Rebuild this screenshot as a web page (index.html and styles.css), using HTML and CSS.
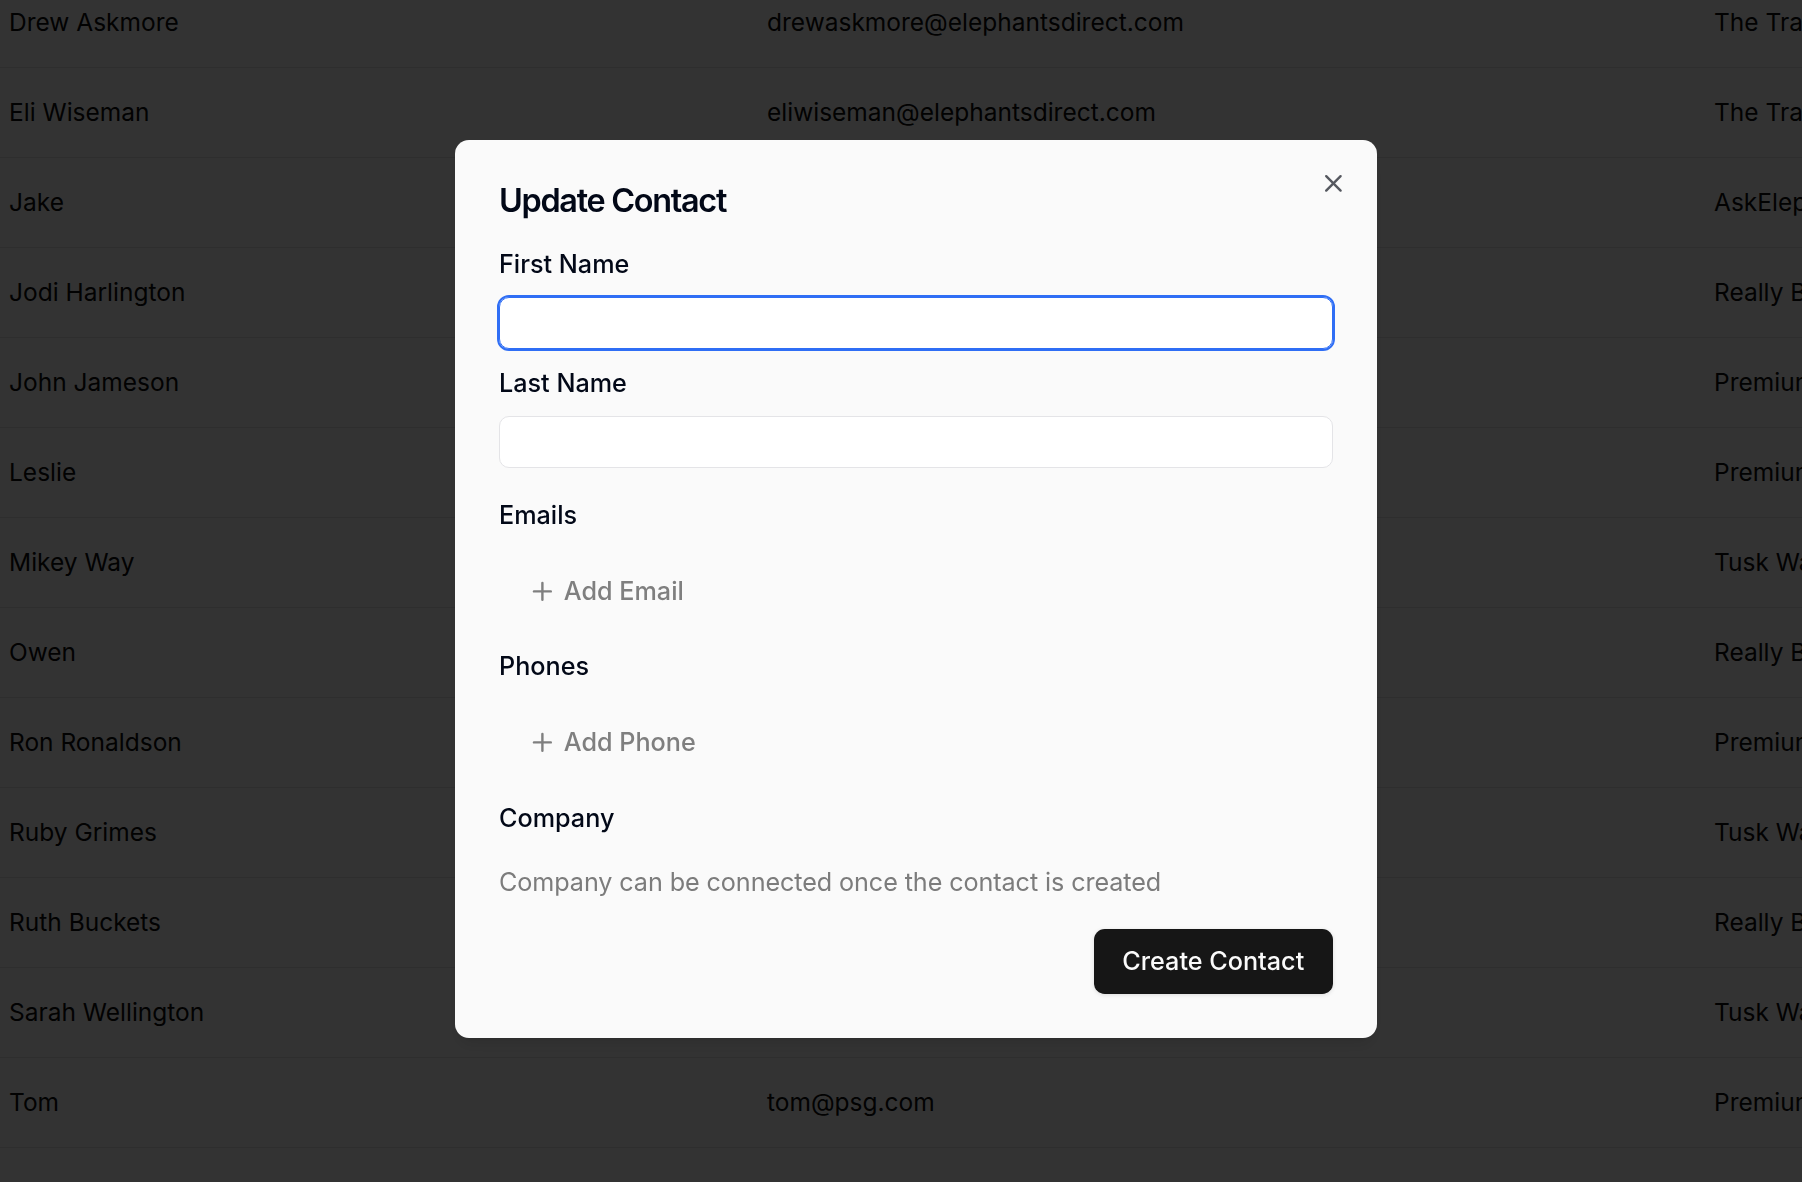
FILE: index.html
```html
<!DOCTYPE html>
<html lang="en">
<head>
<meta charset="utf-8">
<title>Contacts – Update Contact</title>
<link rel="stylesheet" href="styles.css">
</head>
<body>
<main class="contacts">
  <div class="row"><div class="cell name">Drew Askmore</div><div class="cell email">drewaskmore@elephantsdirect.com</div><div class="cell company">The Trading Post</div></div>
  <div class="row"><div class="cell name">Eli Wiseman</div><div class="cell email">eliwiseman@elephantsdirect.com</div><div class="cell company">The Trading Post</div></div>
  <div class="row"><div class="cell name">Jake</div><div class="cell email">jake@askelephant.ai</div><div class="cell company">AskElephant</div></div>
  <div class="row"><div class="cell name">Jodi Harlington</div><div class="cell email">jodi@reallybig.com</div><div class="cell company">Really Big Elephants</div></div>
  <div class="row"><div class="cell name">John Jameson</div><div class="cell email">john@premiumtusks.com</div><div class="cell company">Premium Tusks</div></div>
  <div class="row"><div class="cell name">Leslie</div><div class="cell email">leslie@premiumtusks.com</div><div class="cell company">Premium Tusks</div></div>
  <div class="row"><div class="cell name">Mikey Way</div><div class="cell email">mikey@tuskwarehouse.com</div><div class="cell company">Tusk Warehouse</div></div>
  <div class="row"><div class="cell name">Owen</div><div class="cell email">owen@reallybig.com</div><div class="cell company">Really Big Elephants</div></div>
  <div class="row"><div class="cell name">Ron Ronaldson</div><div class="cell email">ron@premiumtusks.com</div><div class="cell company">Premium Tusks</div></div>
  <div class="row"><div class="cell name">Ruby Grimes</div><div class="cell email">ruby@tuskwarehouse.com</div><div class="cell company">Tusk Warehouse</div></div>
  <div class="row"><div class="cell name">Ruth Buckets</div><div class="cell email">ruth@reallybig.com</div><div class="cell company">Really Big Elephants</div></div>
  <div class="row"><div class="cell name">Sarah Wellington</div><div class="cell email">sarah@tuskwarehouse.com</div><div class="cell company">Tusk Warehouse</div></div>
  <div class="row"><div class="cell name">Tom</div><div class="cell email">tom@psg.com</div><div class="cell company">Premium Tusks</div></div>
</main>

<div class="overlay"></div>

<section class="dialog" role="dialog" aria-labelledby="dlg-title">
  <h2 class="dialog-title" id="dlg-title">Update Contact</h2>

  <label class="field-label label-first" for="first">First Name</label>
  <input class="text-input focused" id="first" type="text">

  <label class="field-label label-gap" for="last">Last Name</label>
  <input class="text-input" id="last" type="text">

  <div class="field-label section-label">Emails</div>
  <button class="ghost-btn" type="button">
    <svg class="plus" viewBox="0 0 24 24" fill="none" stroke="currentColor" stroke-width="2" stroke-linecap="round" stroke-linejoin="round"><path d="M5 12h14"/><path d="M12 5v14"/></svg>
    <span>Add Email</span>
  </button>

  <div class="field-label section-label-2">Phones</div>
  <button class="ghost-btn" type="button">
    <svg class="plus" viewBox="0 0 24 24" fill="none" stroke="currentColor" stroke-width="2" stroke-linecap="round" stroke-linejoin="round"><path d="M5 12h14"/><path d="M12 5v14"/></svg>
    <span>Add Phone</span>
  </button>

  <div class="field-label section-label-3">Company</div>
  <p class="hint">Company can be connected once the contact is created</p>

  <div class="dialog-footer">
    <button class="primary-btn" type="button">Create Contact</button>
  </div>

  <button class="close-btn" type="button" aria-label="Close">
    <svg viewBox="0 0 24 24" fill="none" stroke="currentColor" stroke-width="2" stroke-linecap="round" stroke-linejoin="round"><path d="M18 6 6 18"/><path d="m6 6 12 12"/></svg>
  </button>
</section>
</body>
</html>
```

FILE: styles.css
```css
html, body {
  margin: 0;
  padding: 0;
  width: 100%;
  height: 100%;
  overflow: hidden;
  background: #ffffff;
}

body {
  font-family: Inter, "Noto Sans", sans-serif;
}

/* ---------- background contact list ---------- */
.contacts {
  width: 2600px;
  margin-top: -22px;
  display: flex;
  flex-direction: column;
}

.row {
  display: grid;
  grid-template-columns: 758px 947px 1fr;
  height: 89px;
  border-bottom: 1px solid #e4e4e7;
}

.cell {
  display: flex;
  align-items: center;
  padding: 0 0 2px 9px;
  font-size: 24.5px;
  color: #0a0a0a;
  white-space: nowrap;
}

.overlay {
  position: fixed;
  inset: 0;
  background: rgba(0, 0, 0, 0.8);
}

/* ---------- dialog ---------- */
.dialog {
  position: fixed;
  left: 455px;
  top: 140px;
  width: 834px;
  padding: 45px 44px 44px 44px;
  background: #fafafa;
  border-radius: 14px;
  display: flex;
  flex-direction: column;
  align-items: stretch;
  box-shadow: 0 10px 15px -3px rgba(0,0,0,0.1), 0 4px 6px -4px rgba(0,0,0,0.1);
}

.dialog-title {
  margin: 0;
  font-size: 32.4px;
  line-height: 32.4px;
  font-weight: 600;
  letter-spacing: -0.04em;
  color: #020817;
}

.field-label {
  display: block;
  font-size: 25.2px;
  line-height: 25.2px;
  font-weight: 500;
  color: #020817;
}

.label-first { margin-top: 34.5px; }
.label-gap { margin-top: 22.3px; }
.section-label { margin-top: 35.2px; }
.section-label-2 { margin-top: 30px; }
.section-label-3 { margin-top: 31.2px; }

.text-input {
  box-sizing: border-box;
  margin: 19.5px 0 0 0;
  height: 52px;
  width: 100%;
  border: 1px solid #e4e4e7;
  border-radius: 10px;
  background: #ffffff;
  font: inherit;
  font-size: 25px;
  padding: 0 18px;
  outline: none;
}

.text-input.focused {
  border-color: #2f6ef5;
  outline: 2px solid #2f6ef5;
  outline-offset: 0;
}

.ghost-btn {
  align-self: flex-start;
  margin-top: 31px;
  height: 64.8px;
  padding: 0 28.8px;
  display: inline-flex;
  align-items: center;
  gap: 7.2px;
  border: none;
  background: transparent;
  border-radius: 10.8px;
  font-family: inherit;
  font-size: 25.2px;
  line-height: 36px;
  font-weight: 500;
  color: #7f7f7f;
}

.ghost-btn .plus {
  width: 28.8px;
  height: 28.8px;
  flex: none;
}

.hint {
  margin: 33px 0 0 0;
  font-size: 25.2px;
  line-height: 36px;
  letter-spacing: -0.1px;
  color: #7c7c7c;
}

.dialog-footer {
  margin-top: 28.8px;
  display: flex;
  justify-content: flex-end;
}

.primary-btn {
  height: 64.8px;
  padding: 0 28.8px;
  border: none;
  border-radius: 10.8px;
  background: #161616;
  color: #fafafa;
  font-family: inherit;
  font-size: 25.2px;
  line-height: 36px;
  font-weight: 500;
  box-shadow: 0 1px 4px rgba(0,0,0,0.12);
}

.close-btn {
  position: absolute;
  top: 29px;
  right: 29px;
  width: 29px;
  height: 29px;
  padding: 0;
  border: none;
  background: transparent;
  color: #55585f;
  display: flex;
  align-items: center;
  justify-content: center;
}

.close-btn svg {
  width: 28.8px;
  height: 28.8px;
}
```
